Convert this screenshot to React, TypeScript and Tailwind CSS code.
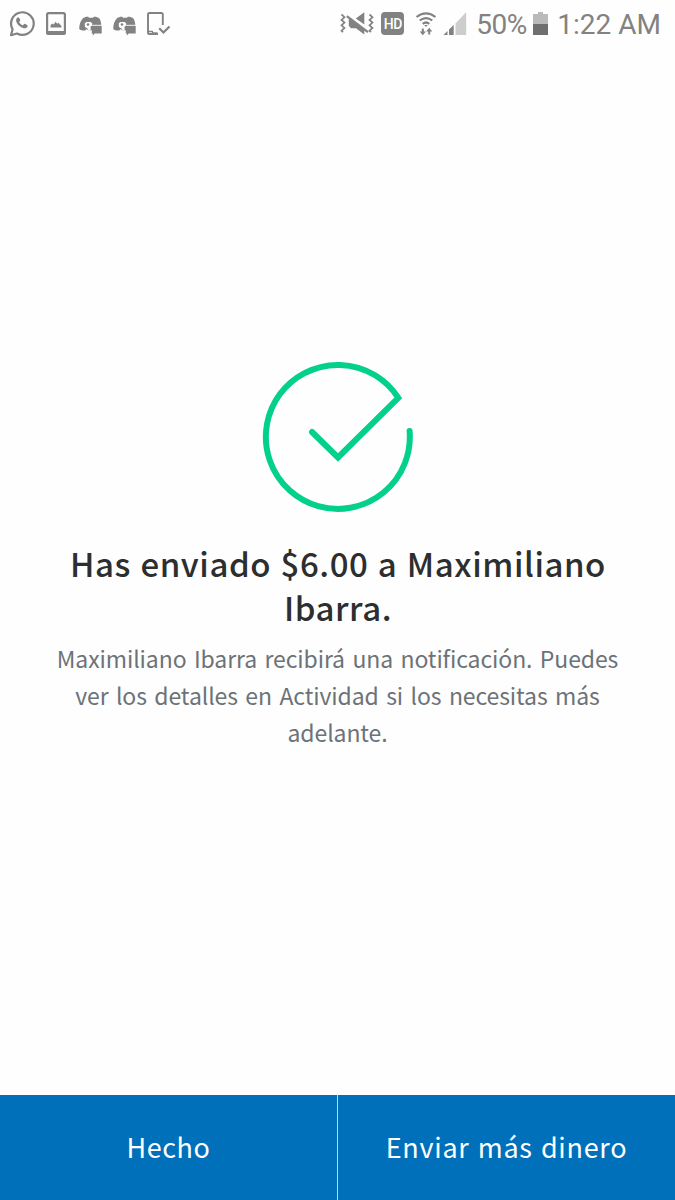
import React from "react";

const GRAY = "#828282";

function WhatsAppIcon() {
  return (
    <svg width="26" height="27" viewBox="0 0 26 27" fill="none" className="mb-[2px] ml-[9px]">
      <path d="M2 25.2 L3.6 19.2 A11.3 11.3 0 1 1 8 23.5 Z" stroke={GRAY} strokeWidth="2.2" strokeLinejoin="round" />
      <path d="M9.3 7.3c-.6 0-2.2 1.2-2.2 3.2 0 1.700 1.300 3.800 3.300 5.500 2 1.600 4 2.300 5.300 2.300 1.600 0 3-1.200 3-2.600 0-.5-2.600-1.900-3.200-1.900-.6 0-1.100 1.500-1.700 1.500-.8 0-3.600-2.400-3.600-3.300 0-.4 1-1 1-1.600 0-.6-1-3.100-1.900-3.100z" fill={GRAY} />
    </svg>
  );
}

function GalleryIcon() {
  return (
    <svg width="20" height="23" viewBox="0 0 20 23" fill="none" className="mb-[1px] ml-[11px]">
      <rect x="1.100" y="1.100" width="17.800" height="20.800" rx="1.500" stroke={GRAY} strokeWidth="2.200" />
      <path d="M2 19h16v3H2z" fill={GRAY} />
      <path d="M4.500 15.500v-2.200l1.800-1.800 1.500 1 1.700-2.700 1.700 2 1.300-1 1.300 1.500 1.700 1.600v1.600z" fill={GRAY} />
    </svg>
  );
}

function DiscordIcon({ className }: { className: string }) {
  return (
    <svg width="24" height="20" viewBox="0 0 24 20" className={className}>
      <path d="M4.2 2 7.200.8h2l.8 1h4l.8-1h2L20 2c1.500 2 2.300 4.500 2.300 8H13v4.200H9l-1.200-1.300-1.700 1.700C3 14.700 1.600 14.200.2 13 .2 8 1.800 4.500 4.200 2z" fill={GRAY} />
      <path d="M5.800 7.300 7.500 6h4.300l1.500 1.600-.5 2.400-1.200.4v3.800H9.500l-1-1.800-2.600-1.400z" fill="white" />
      <circle cx="9" cy="8.500" r="1.300" fill={GRAY} />
      <path d="M12.800 9.900h9.900v7.500h-6.900l-2 2v-2h-1z" fill={GRAY} />
      <path d="M13.200 9.300h9.500" stroke="white" strokeWidth=".9" />
    </svg>
  );
}

function DeviceCheckIcon() {
  return (
    <svg width="24" height="24" viewBox="0 0 24 24" fill="none" className="ml-[10px]">
      <path d="M15.800 13V2.300Q15.800 1 14.500 1H2.300Q1 1 1 2.300V21Q1 22 2.300 22H11" stroke={GRAY} strokeWidth="1.900" />
      <path d="M1 19.500h5M5 21h5.500" stroke={GRAY} strokeWidth="1.500" />
      <path d="M12.200 16.300l4.300 4.200 6-6" stroke={GRAY} strokeWidth="2.300" />
    </svg>
  );
}

function VibrateMuteIcon() {
  return (
    <svg width="35" height="24" viewBox="0 0 35 24" fill="none">
      <path d="M1.500 2.500l3 2.700-3 2.700 3 2.700-3 2.700 3 2.700-3 2.700 1.500 1.500M29.500 2.500l3 2.700-3 2.700 3 2.700-3 2.700 3 2.700-3 2.700 1.500 1.500" stroke={GRAY} strokeWidth="1.700" />
      <path d="M15.800 6.500 24.300.3v12.200z" fill={GRAY} />
      <path d="M8.800 6.500 24.300 18v4.500L16 16.200H11l-2.200-2.500z" fill={GRAY} />
      <path d="M6.800 4.200 28 20.200" stroke={GRAY} strokeWidth="2.200" />
    </svg>
  );
}

function WifiIcon() {
  return (
    <svg width="22" height="24" viewBox="0 0 22 24" fill="none" className="ml-[11px]">
      <path d="M1.500 5q9.500-7.400 19 0M4.700 8.500q6.300-4.800 12.600 0M7.700 11.800q3.300-2.600 6.600 0" stroke={GRAY} strokeWidth="2.200" />
      <path d="M9.200 13h3.600L11 15z" fill={GRAY} />
      <path d="M6.800 16.500h2v3h2.100l-3.100 3.700-3.100-3.700h2.100zM13.200 22.500h2v-3h2.100l-3.100-3.700-3.100 3.700h2.100z" fill={GRAY} />
    </svg>
  );
}

function SignalIcon() {
  return (
    <svg width="24" height="24" viewBox="0 0 24 24" className="ml-[6px]">
      <path d="M12.500 11.500 23.200 0v23H12.500z" fill="#cdcdcd" />
      <path d="M.5 23 4.500 19v4zM6 17.500l4.700-4.500v10H6z" fill={GRAY} />
    </svg>
  );
}

function StatusBar() {
  return (
    <header className="flex h-[48px] items-center font-['Roboto',sans-serif] text-[28px] leading-none text-[#828282]">
      <WhatsAppIcon />
      <GalleryIcon />
      <DiscordIcon className="ml-[13px] mt-[4px]" />
      <DiscordIcon className="ml-[10px] mt-[4px]" />
      <DeviceCheckIcon />
      <div className="ml-auto flex items-center pr-[14px]">
        <VibrateMuteIcon />
        <span className="mb-[1px] ml-[6px] flex h-[23px] w-[23px] items-center justify-center rounded-[4px] bg-[#828282] text-[14px] font-medium tracking-[-0.5px] text-white">HD</span>
        <WifiIcon />
        <SignalIcon />
        <span className="ml-[9px] mt-[1px] w-[51px] whitespace-nowrap tracking-[-0.5px]">50%</span>
        <svg width="15" height="23" viewBox="0 0 15 23" className="mb-[1px] ml-[6px]">
          <path d="M0 2h5V0h5v2h5v10H0z" fill="#bababa" />
          <path d="M0 12h15v11H0z" fill="#6f6f6f" />
        </svg>
        <span className="ml-[9px] mt-[1px] whitespace-nowrap">1:22 AM</span>
      </div>
    </header>
  );
}

export default function App() {
  return (
    <div className="flex h-[1200px] w-[675px] flex-col bg-[#fefefe] font-['Noto_Sans_CJK_SC',sans-serif]">
      <StatusBar />
      <main className="flex flex-1 flex-col items-center pt-[310px] text-center">
        <svg width="161" height="160" viewBox="0 0 161 160" fill="none">
          <path
            d="M55 74 81 99.500 141.300 39.800A72 72 0 1 0 152.600 73"
            stroke="#02d08c"
            strokeWidth="6"
            strokeLinecap="round"
            strokeLinejoin="miter"
          />
        </svg>
        <h1 className="mt-[23px] pl-[1px] text-[33px] font-medium leading-[44px] tracking-[0.550px] text-[#2c2e2f] [word-spacing:1.5px]">
          Has enviado $6.00 a Maximiliano
          <br />
          Ibarra.
        </h1>
        <p className="mt-[11px] text-[23px] leading-[37px] tracking-[-0.100px] text-[#6c7378] [word-spacing:2.4px]">
          Maximiliano Ibarra recibirá una notificación. Puedes
          <br />
          ver los detalles en Actividad si los necesitas más
          <br />
          adelante.
        </p>
      </main>
      <footer className="flex h-[105px] text-[27px] text-white">
        <button className="w-[338px] border-r border-[#b5dcf5] bg-[#0070ba] pb-[1px] tracking-[0.600px]">Hecho</button>
        <button className="flex-1 bg-[#0070ba] pb-[1px] tracking-[0.700px] [word-spacing:1.5px]">Enviar más dinero</button>
      </footer>
    </div>
  );
}
